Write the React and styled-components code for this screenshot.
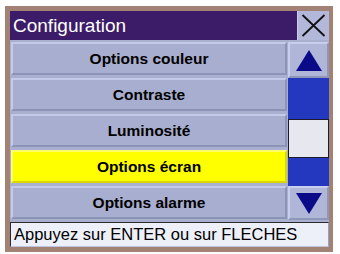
import React from "react";
import styled, { createGlobalStyle } from "styled-components";

const Global = createGlobalStyle`
  html, body {
    margin: 0;
    padding: 0;
    background: #ffffff;
  }
  * {
    box-sizing: border-box;
  }
`;

const Frame = styled.div`
  margin: 6px 0 0 5px;
  width: 328px;
  height: 246px;
  padding: 5px 4px 5px 5px;
  background: #a38276;
  font-family: "Liberation Sans", Arial, sans-serif;
`;

const Screen = styled.div`
  display: flex;
  flex-direction: column;
  height: 100%;
  background: #a9afcf;
`;

const TitleRow = styled.div`
  display: flex;
  height: 29px;
`;

const TitleBar = styled.div`
  flex: 1;
  display: flex;
  align-items: center;
  padding-left: 3px;
  background: #3c1c69;
  color: #ffffff;
  font-size: 19px;
  line-height: 1;
`;

const CloseButton = styled.div`
  width: 32px;
  display: flex;
  align-items: center;
  justify-content: center;
  background: #b3b8da;
  border-left: 1px solid #c8ccea;
`;

const Body = styled.div`
  display: flex;
  height: 182px;
`;

const List = styled.div`
  flex: 1;
  display: flex;
  flex-direction: column;
  gap: 3px;
  padding: 2px 1px 0 1px;
`;

const Row = styled.div`
  height: 33px;
  display: flex;
  align-items: center;
  justify-content: center;
  font-size: 15.5px;
  font-weight: bold;
  color: #000;
  background: ${(p) => (p.$active ? "#ffff00" : "#a8aecf")};
  border-top: 2px solid ${(p) => (p.$active ? "#ffff66" : "#c4caec")};
  border-left: 2px solid ${(p) => (p.$active ? "#ffff66" : "#c4caec")};
  border-bottom: 2px solid ${(p) => (p.$active ? "#d8d800" : "#8d93b6")};
  border-right: 2px solid ${(p) => (p.$active ? "#d8d800" : "#8d93b6")};
`;

const Scrollbar = styled.div`
  width: 41px;
  display: flex;
  flex-direction: column;
  padding: 2px 0 2px 0;
`;

const ArrowButton = styled.div`
  height: ${(p) => p.$h}px;
  display: flex;
  align-items: center;
  justify-content: center;
  background: #b0b6d8;
  border-top: 2px solid #c8ceee;
  border-left: 2px solid #c8ceee;
  border-bottom: 2px solid #9096b8;
  border-right: 2px solid #9096b8;
`;

const Track = styled.div`
  flex: 1;
  background: #2437bf;
  padding-top: 41px;
`;

const Thumb = styled.div`
  height: 39px;
  background: #e7e7f0;
  border: 1px solid #1a1a2a;
`;

const StatusBar = styled.div`
  flex: 1;
  display: flex;
  align-items: center;
  padding-left: 3px;
  background: #eef0f9;
  border: 1px solid #2a2a2a;
  border-right-color: #9aa0c0;
  border-bottom-color: #c0c4dc;
  font-size: 16.5px;
  color: #000;
`;

const items = [
  "Options couleur",
  "Contraste",
  "Luminosité",
  "Options écran",
  "Options alarme",
];

export default function App() {
  return (
    <>
      <Global />
      <Frame>
        <Screen>
          <TitleRow>
            <TitleBar>Configuration</TitleBar>
            <CloseButton>
              <svg width="25" height="23" viewBox="0 0 25 23">
                <path d="M1.5 1 L23.5 22 M23.5 1 L1.5 22" stroke="#111" strokeWidth="1.8" />
              </svg>
            </CloseButton>
          </TitleRow>
          <Body>
            <List>
              {items.map((t, i) => (
                <Row key={t} $active={i === 3}>
                  {t}
                </Row>
              ))}
            </List>
            <Scrollbar>
              <ArrowButton $h={36}>
                <svg width="26" height="21" viewBox="0 0 26 21">
                  <polygon points="13,0 26,21 0,21" fill="#0b0b8a" />
                </svg>
              </ArrowButton>
              <Track>
                <Thumb />
              </Track>
              <ArrowButton $h={34}>
                <svg width="26" height="21" viewBox="0 0 26 21">
                  <polygon points="0,0 26,0 13,21" fill="#0b0b8a" />
                </svg>
              </ArrowButton>
            </Scrollbar>
          </Body>
          <StatusBar>Appuyez sur ENTER ou sur FLECHES</StatusBar>
        </Screen>
      </Frame>
    </>
  );
}
